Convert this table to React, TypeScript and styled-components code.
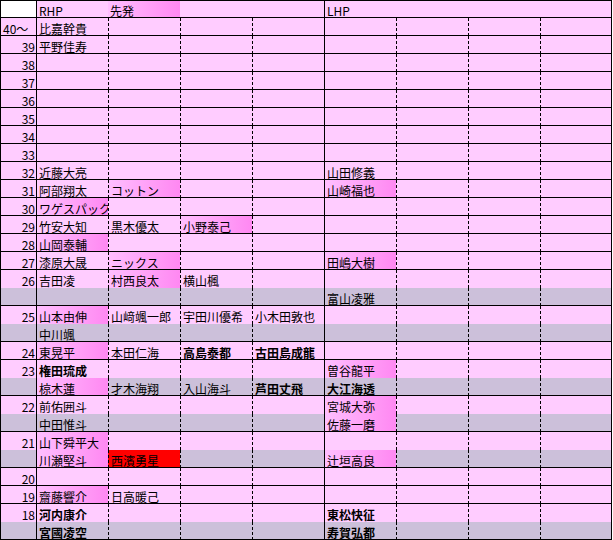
import React from "react";
import styled, { createGlobalStyle, css } from "styled-components";

type Fill = "hl" | "red" | "head" | undefined;

interface CellInfo {
  text: string;
  fill?: Fill;
  bold?: boolean;
}

interface Group {
  label: string;
  rows: string[][];
}

const GlobalStyle = createGlobalStyle`
  html, body {
    margin: 0;
    padding: 0;
    background: #ffffff;
  }
  body {
    font-family: "Noto Sans CJK JP", "Liberation Sans", sans-serif;
  }
`;

// "+" highlighted, "!" red, "*" bold
const parse = (raw: string = ""): CellInfo => {
  let text = raw;
  let fill: Fill;
  let bold = false;
  while (text.length && "+!*".includes(text[0])) {
    if (text[0] === "+") fill = "hl";
    if (text[0] === "!") fill = "red";
    if (text[0] === "*") bold = true;
    text = text.slice(1);
  }
  return { text, fill, bold };
};

const groups: Group[] = [
  { label: "40〜", rows: [["比嘉幹貴"]] },
  { label: "39", rows: [["平野佳寿"]] },
  { label: "38", rows: [[]] },
  { label: "37", rows: [[]] },
  { label: "36", rows: [[]] },
  { label: "35", rows: [[]] },
  { label: "34", rows: [[]] },
  { label: "33", rows: [[]] },
  { label: "32", rows: [["近藤大亮", "", "", "", "山田修義"]] },
  { label: "31", rows: [["阿部翔太", "+コットン", "", "", "+山崎福也"]] },
  { label: "30", rows: [["+ワゲスパック"]] },
  { label: "29", rows: [["竹安大知", "黒木優太", "+小野泰己"]] },
  { label: "28", rows: [["+山岡泰輔"]] },
  { label: "27", rows: [["漆原大晟", "+ニックス", "", "", "+田嶋大樹"]] },
  {
    label: "26",
    rows: [
      ["吉田凌", "+村西良太", "横山楓"],
      ["", "", "", "", "富山凌雅"],
    ],
  },
  {
    label: "25",
    rows: [["+山本由伸", "山﨑颯一郎", "宇田川優希", "小木田敦也"], ["中川颯"]],
  },
  { label: "24", rows: [["+東晃平", "本田仁海", "*高島泰都", "*古田島成龍"]] },
  {
    label: "23",
    rows: [
      ["*権田琉成", "", "", "", "+曽谷龍平"],
      ["+椋木蓮", "才木海翔", "入山海斗", "*芦田丈飛", "*大江海透"],
    ],
  },
  {
    label: "22",
    rows: [
      ["前佑囲斗", "", "", "", "+宮城大弥"],
      ["中田惟斗", "", "", "", "+佐藤一磨"],
    ],
  },
  {
    label: "21",
    rows: [["+山下舜平大"], ["+川瀬堅斗", "!西濱勇星", "", "", "+辻垣高良"]],
  },
  { label: "20", rows: [[]] },
  { label: "19", rows: [["+齋藤響介", "日高暖己"]] },
  {
    label: "18",
    rows: [
      ["*河内康介", "", "", "", "*東松快征"],
      ["*宮國凌空", "", "", "", "*寿賀弘都"],
    ],
  },
];

const PINK = "#ffccff";
const GREY = "#ccc0da";
const DASH =
  "repeating-linear-gradient(to bottom, #000 0 3px, transparent 3px 5px) left top / 1px 100% no-repeat";

const fillBg = (fill: Fill, sub: boolean) => {
  if (fill === "hl" || fill === "head")
    return "linear-gradient(90deg, #ffbfff 0%, #ff88f2 100%)";
  if (fill === "red") return "#ff0000";
  return sub ? GREY : PINK;
};

const Sheet = styled.div`
  display: grid;
  grid-template-columns: 36px repeat(8, 72px);
  width: 613px;
  font-family: "Noto Sans CJK JP", "Liberation Sans", sans-serif;
  font-size: 12px;
  color: #000;
`;

const Cell = styled.div<{
  $fill?: Fill;
  $sub?: boolean;
  $bold?: boolean;
  $edge?: "solid" | "dash" | "none";
  $last?: boolean;
  $bottom?: boolean;
  $top?: boolean;
  $right?: boolean;
  $corner?: boolean;
}>`
  box-sizing: border-box;
  height: 18px;
  padding: 3px 0 0 2px;
  line-height: 15px;
  white-space: nowrap;
  font-weight: ${(p) => (p.$bold ? 700 : 400)};
  border-left: ${(p) => (p.$edge === "solid" ? "1px solid #000" : "none")};
  border-right: ${(p) => (p.$last ? "1px solid #000" : "none")};
  border-bottom: ${(p) => (p.$bottom ? "1px solid #000" : "none")};
  border-top: ${(p) => (p.$top ? "1px solid #000" : "none")};
  text-align: ${(p) => (p.$right ? "right" : "left")};
  ${(p) => p.$right && "padding-right: 1px;"}
  ${(p) => p.$top && "padding-top: 2px;"}
  ${(p) =>
    p.$edge === "dash"
      ? css`
          background: ${DASH}, ${fillBg(p.$fill, !!p.$sub)};
          padding-left: 3px;
        `
      : css`
          background: ${p.$corner ? "#fff" : fillBg(p.$fill, !!p.$sub)};
        `}
`;

const edgeFor = (col: number, header: boolean): "solid" | "dash" | "none" => {
  if (col === 0 || col === 1 || col === 5) return "solid";
  return header ? "none" : "dash";
};

const header = ["RHP", "+先発", "", "", "LHP", "", "", ""];

export default function App() {
  return (
    <>
      <GlobalStyle />
      <Sheet>
        <Cell $edge="solid" $top $bottom $corner />
        {header.map((raw, i) => {
          const c = parse(raw);
          return (
            <Cell
              key={`h${i}`}
              $edge={edgeFor(i + 1, true)}
              $fill={c.fill}
              $last={i === 7}
              $top
              $bottom
            >
              {c.text}
            </Cell>
          );
        })}
        {groups.map((g) =>
          g.rows.map((row, r) => {
            const sub = r > 0;
            const bottom = r === g.rows.length - 1;
            return (
              <React.Fragment key={`${g.label}-${r}`}>
                <Cell $edge="solid" $sub={sub} $bottom={bottom} $right={g.label !== "40〜"}>
                  {sub ? "" : g.label}
                </Cell>
                {Array.from({ length: 8 }, (_, i) => {
                  const c = parse(row[i]);
                  return (
                    <Cell
                      key={i}
                      $edge={edgeFor(i + 1, false)}
                      $fill={c.fill}
                      $bold={c.bold}
                      $sub={sub}
                      $bottom={bottom}
                      $last={i === 7}
                    >
                      {c.text}
                    </Cell>
                  );
                })}
              </React.Fragment>
            );
          }),
        )}
      </Sheet>
    </>
  );
}
